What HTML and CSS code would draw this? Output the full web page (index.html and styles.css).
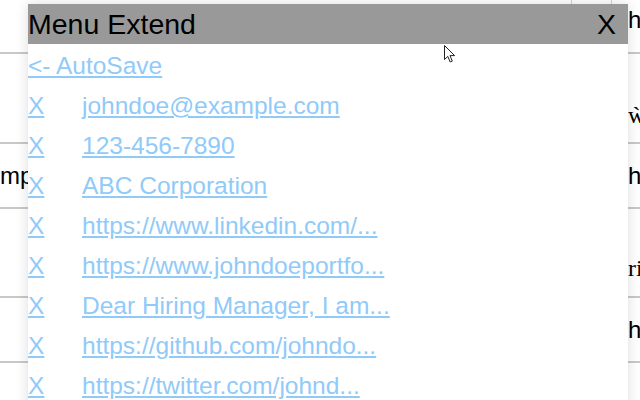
FILE: index.html
```html
<!DOCTYPE html>
<html>
<head>
<meta charset="utf-8">
<title>Menu Extend</title>
<link rel="stylesheet" href="styles.css">
</head>
<body>
<div class="page">
  <div class="row r1">
    <div class="cell c1"></div>
    <div class="cell c2"></div>
    <div class="cell c3 sans">h</div>
  </div>
  <div class="row r2">
    <div class="cell c1"></div>
    <div class="cell c2"></div>
    <div class="cell c3 serif">ẁ</div>
  </div>
  <div class="row r3">
    <div class="cell c1 sans"><span class="clip">mp</span></div>
    <div class="cell c2"></div>
    <div class="cell c3 sans">h</div>
  </div>
  <div class="row r4">
    <div class="cell c1"></div>
    <div class="cell c2"></div>
    <div class="cell c3 serif">ri</div>
  </div>
  <div class="row r5">
    <div class="cell c1"></div>
    <div class="cell c2"></div>
    <div class="cell c3 sans">h</div>
  </div>
  <div class="row r6"></div>
</div>

<div class="menu">
  <div class="menu-head">
    <span class="menu-title">Menu Extend</span>
    <span class="menu-close">X</span>
  </div>
  <div class="menu-body">
    <div class="item back"><a href="#">&lt;- AutoSave</a></div>
    <div class="item"><a href="#">X</a><a href="#">johndoe@example.com</a></div>
    <div class="item"><a href="#">X</a><a href="#">123-456-7890</a></div>
    <div class="item"><a href="#">X</a><a href="#">ABC Corporation</a></div>
    <div class="item"><a href="#">X</a><a href="#">https://www.linkedin.com/...</a></div>
    <div class="item"><a href="#">X</a><a href="#">https://www.johndoeportfo...</a></div>
    <div class="item"><a href="#">X</a><a href="#">Dear Hiring Manager, I am...</a></div>
    <div class="item"><a href="#">X</a><a href="#">https://github.com/johndo...</a></div>
    <div class="item"><a href="#">X</a><a href="#">https://twitter.com/johnd...</a></div>
  </div>
</div>

<svg class="cursor" width="14" height="20" viewBox="0 0 14 20">
  <path d="M1.5 1.5 L1.5 15.5 L4.8 12.4 L7.2 18 L9.3 17.1 L7 11.6 L11.6 11.6 Z" fill="#fff" stroke="#222" stroke-width="1" stroke-linejoin="round"/>
</svg>
</body>
</html>
```
FILE: styles.css
```css
html, body {
  margin: 0;
  padding: 0;
  width: 640px;
  height: 400px;
  overflow: hidden;
  background: #fff;
}
body {
  position: relative;
  font-family: "Liberation Sans", Arial, sans-serif;
}
.page {
  display: flex;
  flex-direction: column;
  width: 640px;
}
.row {
  display: grid;
  grid-template-columns: 571px 41px 1fr;
  border-bottom: 2px solid #c8c8c8;
  box-sizing: content-box;
}
.cell {
  font-size: 24px;
  color: #000;
  white-space: nowrap;
  overflow: hidden;
}
.clip {
  display: inline-block;
  width: 28px;
  overflow: hidden;
  vertical-align: top;
}
.c2 {
  border-left: 1px solid #d4d4d4;
  border-right: 1px solid #d4d4d4;
}
.c3 {
  padding-left: 16px;
}
.sans {
  font-family: "Liberation Sans", Arial, sans-serif;
}
.serif {
  font-family: "Liberation Serif", "Times New Roman", serif;
}
.r1 { height: 52px; }
.r1 .cell { padding-top: 6px; }
.r2 { height: 88px; }
.r2 .cell { padding-top: 48px; }
.r3 { height: 63px; align-items: center; }
.r4 { height: 87px; }
.r4 .cell { padding-top: 46px; }
.r5 { height: 63px; align-items: center; }
.r6 { height: 40px; border-bottom: none; }

.menu {
  position: absolute;
  left: 28px;
  top: 4px;
  width: 600px;
  height: 430px;
  background: #fff;
  box-shadow: 0 0 12px rgba(0, 0, 0, 0.14);
}
.menu-head {
  height: 40px;
  background: #999999;
  display: flex;
  align-items: center;
  justify-content: space-between;
  padding-right: 12px;
  font-size: 28.5px;
  color: #000;
}
.menu-body {
  padding-top: 2px;
}
.item {
  display: grid;
  grid-template-columns: 54px 1fr;
  height: 40px;
  line-height: 40px;
  font-size: 24.5px;
}
.item.back {
  grid-template-columns: 1fr;
}
.item a {
  color: #90caf9;
  text-decoration: underline;
  white-space: nowrap;
  justify-self: start;
}
.cursor {
  position: absolute;
  left: 443px;
  top: 44px;
}
```
